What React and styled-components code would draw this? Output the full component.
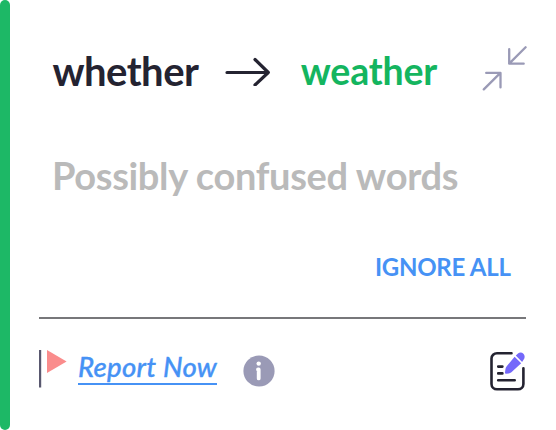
import styled, { createGlobalStyle } from 'styled-components';

const COLORS = {
  green: '#1db866',
  greenText: '#14b55f',
  ink: '#242331',
  muted: '#bababa',
  blue: '#4692f5',
  lavender: '#9a9ab6',
  coral: '#fa8c8c',
  violet: '#7468fa',
  rule: '#77777a',
};

function App() {
  return (
    <>
      <GlobalStyle />
      <Card>
        <Accent />
        <Content>
          <Header>
            <Original>whether</Original>
            <ArrowIcon />
            <Suggestion>weather</Suggestion>
            <CollapseButton aria-label="Collapse">
              <CollapseIcon />
            </CollapseButton>
          </Header>

          <Category>Possibly confused words</Category>

          <IgnoreButton>IGNORE ALL</IgnoreButton>

          <Footer>
            <FlagIcon />
            <ReportLink href="#">Report Now</ReportLink>
            <InfoIcon />
            <EditButton aria-label="Edit">
              <EditIcon />
            </EditButton>
          </Footer>
        </Content>
      </Card>
    </>
  );
}

function ArrowIcon() {
  return (
    <Icon width="46" height="32" viewBox="0 0 46 32" fill="none">
      <path
        d="M2 18.5H43M30 5.5L43.3 18.5L30 31"
        stroke={COLORS.ink}
        strokeWidth="3.2"
        strokeLinecap="round"
        strokeLinejoin="round"
      />
    </Icon>
  );
}

function CollapseIcon() {
  return (
    <Icon width="46" height="48" viewBox="0 0 46 48" fill="none">
      <path
        d="M43.6 1.3L27.2 17.6M27.2 3.2V17.7H41.7M1.8 43.4L18.4 26.9M4.2 26.9H18.5V41.4"
        stroke={COLORS.lavender}
        strokeWidth="2.3"
        strokeLinecap="round"
        strokeLinejoin="round"
      />
    </Icon>
  );
}

function FlagIcon() {
  return (
    <Icon width="28" height="38" viewBox="0 0 28 38" fill="none">
      <path d="M1.1 0V37.5" stroke="#59586f" strokeWidth="2.2" />
      <path d="M8 0L27.6 11.5L8 23Z" fill={COLORS.coral} />
    </Icon>
  );
}

function InfoIcon() {
  return (
    <Icon width="32" height="32" viewBox="0 0 32 32">
      <circle cx="16" cy="16" r="15.6" fill={COLORS.lavender} />
      <circle cx="15.7" cy="8.6" r="2.2" fill="#fff" />
      <path
        d="M15 14.4H15.7V23.4"
        fill="none"
        stroke="#fff"
        strokeWidth="3.8"
        strokeLinecap="round"
        strokeLinejoin="round"
      />
    </Icon>
  );
}

function EditIcon() {
  return (
    <Icon width="36" height="41" viewBox="0 0 36 41" fill="none">
      <path
        d="M21.5 3.2H7C4 3.2 1.5 5.5 1.5 8.5V34C1.5 37 4 39.3 7 39.3H28C31 39.3 33.4 37 33.4 34V18.3M8.2 16.6H12.4M8.2 23.4H12.4M8.2 30.3H24.7"
        stroke={COLORS.ink}
        strokeWidth="2.6"
        strokeLinecap="round"
        strokeLinejoin="round"
      />
      <path
        d="M24.6 6.7L31.2 13.3L21.4 22.2C20.6 22.9 19.7 23.3 18.7 23.4L16 23.7C15.3 23.7 14.9 23.3 15 22.6L15.4 19.4C15.5 18.2 15.9 17.2 16.7 16.3Z"
        fill={COLORS.violet}
      />
      <path
        d="M25.8 5.6L28 3.5C29.8 1.9 32 2.3 33.4 3.7C34.9 5.3 35.1 7.8 33.7 9.5L32.1 11.9Z"
        fill={COLORS.violet}
      />
    </Icon>
  );
}

const GlobalStyle = createGlobalStyle`
  *,
  *::before,
  *::after {
    box-sizing: border-box;
  }

  body {
    margin: 0;
    background: #fff;
    font-family: Lato, 'Liberation Sans', sans-serif;
  }
`;

const Card = styled.article`
  display: flex;
  width: 556px;
  height: 430px;
  background: #fff;
`;

const Accent = styled.div`
  flex: none;
  width: 10.4px;
  border-radius: 6px;
  background: ${COLORS.green};
`;

const Content = styled.div`
  flex: 1;
  display: flex;
  flex-direction: column;
  padding: 46px 30px 0 28.6px;
`;

const Header = styled.header`
  display: flex;
  align-items: center;
  height: 48px;
  padding-left: 13.4px;
`;

const Icon = styled.svg`
  display: block;
  flex: none;
`;

const Word = styled.span`
  padding-top: 2px;
  line-height: 48px;
  font-weight: 700;
`;

const Original = styled(Word)`
  width: 172.6px;
  color: ${COLORS.ink};
  font-size: 40px;
  letter-spacing: -0.5px;
`;

const Suggestion = styled(Word)`
  margin-left: 29.8px;
  color: ${COLORS.greenText};
  font-size: 37.5px;
  letter-spacing: -0.2px;
`;

const PlainButton = styled.button`
  padding: 0;
  border: none;
  background: transparent;
  font-family: inherit;
  cursor: pointer;
`;

const CollapseButton = styled(PlainButton)`
  margin: 0 -2px 0 auto;
`;

const Category = styled.p`
  margin: 57px 0 0;
  padding-left: 13px;
  color: ${COLORS.muted};
  font-size: 38px;
  font-weight: 700;
  letter-spacing: -0.33px;
  line-height: 48px;
  white-space: nowrap;
`;

const IgnoreButton = styled(PlainButton)`
  align-self: flex-end;
  margin: 53px 15.3px 0 0;
  color: ${COLORS.blue};
  font-size: 24px;
  font-weight: 700;
  letter-spacing: -0.25px;
  line-height: 30px;
`;

const Footer = styled.footer`
  display: flex;
  align-items: flex-start;
  margin-top: 35px;
  padding-top: 31px;
  border-top: 2px solid ${COLORS.rule};
`;

const ReportLink = styled.a`
  margin: 1px 26px 0 11px;
  border-bottom: 2px solid ${COLORS.blue};
  color: ${COLORS.blue};
  font-size: 27.5px;
  font-style: italic;
  font-weight: 500;
  letter-spacing: 0.28px;
  line-height: 32px;
  text-decoration: none;
  white-space: nowrap;
  -webkit-text-stroke: 0.35px ${COLORS.blue};

  & + ${Icon} {
    margin-top: 5px;
  }
`;

const EditButton = styled(PlainButton)`
  margin-left: auto;
`;

export default App;
